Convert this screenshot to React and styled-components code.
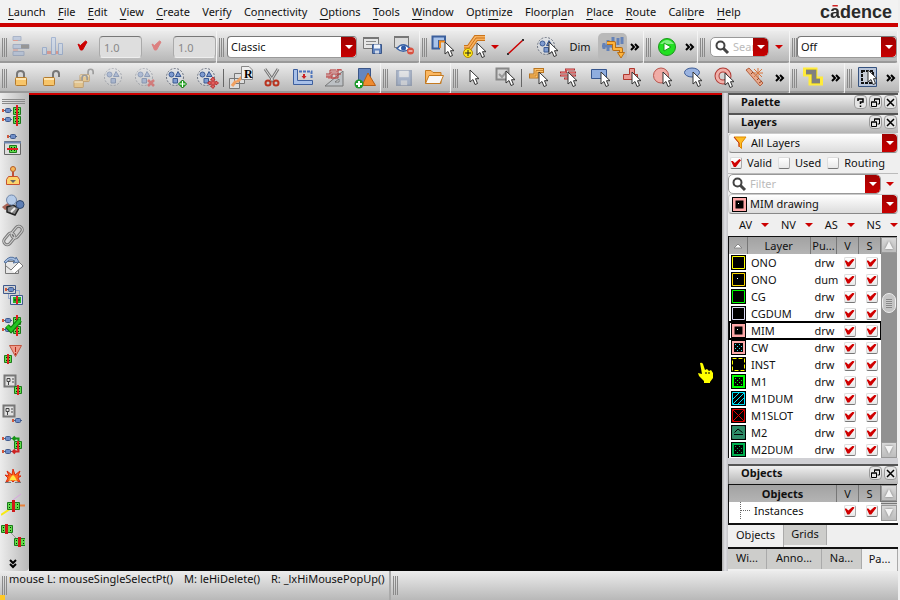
import React, { useState } from "react";
import styled, { createGlobalStyle, css } from "styled-components";

const MENUS = [
	["", "L", "aunch"],
	["", "F", "ile"],
	["", "E", "dit"],
	["", "V", "iew"],
	["", "C", "reate"],
	["Ver", "i", "fy"],
	["Co", "n", "nectivity"],
	["", "O", "ptions"],
	["", "T", "ools"],
	["", "W", "indow"],
	["Opti", "m", "ize"],
	["Floorpl", "a", "n"],
	["", "P", "lace"],
	["", "R", "oute"],
	["Cali", "b", "re"],
	["", "H", "elp"],
];

const LAYERS = [
	{ name: "ONO", purpose: "drw", color: "#ffff00", pattern: "solid" },
	{ name: "ONO", purpose: "dum", color: "#ffd700", pattern: "dot" },
	{ name: "CG", purpose: "drw", color: "#00ff00", pattern: "solid" },
	{ name: "CGDUM", purpose: "drw", color: "#d9d9f3", pattern: "solid" },
	{ name: "MIM", purpose: "drw", color: "#ffa9a9", pattern: "thick" },
	{ name: "CW", purpose: "drw", color: "#ffa9a9", pattern: "dots", fill: "#39d8e8" },
	{ name: "INST", purpose: "drw", color: "#ffff00", pattern: "dashed" },
	{ name: "M1", purpose: "drw", color: "#00ff00", pattern: "dots" },
	{ name: "M1DUM", purpose: "drw", color: "#00e5ff", pattern: "hatch" },
	{ name: "M1SLOT", purpose: "drw", color: "#e00000", pattern: "cross" },
	{ name: "M2", purpose: "drw", color: "#2e8b68", pattern: "tri" },
	{ name: "M2DUM", purpose: "drw", color: "#00b050", pattern: "dots" },
];

/* ---------- drawings ---------- */

const Svg = ({ w = 24, h = 24, children }) => (
	<svg width={w} height={h} viewBox={`0 0 ${w} ${h}`} fill="none" aria-hidden="true">
		{children}
	</svg>
);

const Pointer = ({ x, y }) => (
	<path
		transform={`translate(${x} ${y})`}
		d="M0 0V12L3 9.5L5 14.5L7.5 13.5L5.5 8.7H9Z"
		fill="#fff"
		stroke="#333"
	/>
);

const Cell = ({ x, y }) => (
	<g transform={`translate(${x} ${y})`}>
		<path d="M.5 .5H7.5V7.5H.5Z" fill="#5fdc4a" stroke="#1c7a1c" />
		<path d="M2 2H3V3H2ZM2 5H3V6H2ZM5 2H6V3H5ZM5 5H6V6H5Z" fill="#042b04" />
	</g>
);

const Pin = ({ x, y }) => (
	<g transform={`translate(${x} ${y})`}>
		<path d="M0 1H2V4H0Z" fill="#d0583c" />
		<path d="M2 2.5H10" stroke="#445b86" />
		<rect x="3.5" y=".5" width="5" height="4" rx="1" fill="#6f8ec8" stroke="#405a8c" />
	</g>
);

const Padlock = ({ x = 0, open }) => (
	<g transform={`translate(${x} 0)`}>
		<path d={open ? "M13 12V8Q13 5 16 5Q19 5 19 8V11" : "M8 12V8Q8 5 11.5 5Q15 5 15 8V12"} stroke="#777" strokeWidth="2" />
		<rect x={open ? 3.5 : 6.5} y="11.5" width="11" height="8" rx="1" fill="#f7c56a" stroke="#b57b2c" />
		<path d={open ? "M4 13H14" : "M7 13H17"} stroke="#ffe5ae" strokeWidth="2" />
	</g>
);

const Cluster = () => (
	<g>
		<circle cx="11" cy="11" r="8.5" stroke="#6b7280" strokeDasharray="2 1.5" fill="#dfe3ea" fillOpacity=".5" />
		<circle cx="7.5" cy="8.5" r="2.5" fill="#7e9bd0" stroke="#3b5a93" />
		<path d="M14 5.5L17 10.5H11.5Z" fill="#7e9bd0" stroke="#3b5a93" />
		<path d="M9 12.5H13.5V17H9Z" fill="#7e9bd0" stroke="#3b5a93" />
	</g>
);

const Floppy = ({ x, y, s = 1 }) => (
	<g transform={`translate(${x} ${y}) scale(${s})`}>
		<path d="M.5 .5H9.5V9.5H.5Z" fill="#5f82bd" stroke="#3b5688" />
		<path d="M2 .5H8V4.5H2Z" fill="#eef3fb" />
		<path d="M3 6.5H7V9.5H3Z" fill="#cfd7e5" />
	</g>
);

const ICONS = {
	align: (
		<g opacity=".55">
			<path d="M4 1.5H12V5.5H4ZM4 9.5H20V13.5H4ZM4 16.5H15V20.5H4Z" fill="#a9bcdc" stroke="#7d90b3" />
			<path d="M4 5.5H9M4 15H9" stroke="#e06a5a" />
			<path d="M12 11.5H20" stroke="#666" strokeWidth="4" />
		</g>
	),
	bars: (
		<g opacity=".5">
			<path d="M2.5 12.5H6.5V19.5H2.5ZM11.5 2.5H15.5V19.5H11.5ZM18.5 8.5H22.5V19.5H18.5Z" fill="#c8d8f0" stroke="#6f8fc4" />
			<path d="M7 17.5H11M16 17.5H18" stroke="#e06a5a" strokeWidth="3" />
		</g>
	),
	check: <path d="M7 9L9.5 10.5L14.5 6L16 7L11.5 15H9.5Z" fill="#cc0000" stroke="#cc0000" />,
	checkOff: <path d="M7 9L9.5 10.5L14.5 6L16 7L11.5 15H9.5Z" fill="#dc8080" stroke="#dc8080" />,
	winSave: (
		<g>
			<path d="M2.5 2.5H17.5V13.5H2.5Z" fill="#e6e6e6" stroke="#777" />
			<path d="M2 3H18" stroke="#777" strokeWidth="2" />
			<path d="M5 6.5H15M5 9.5H11" stroke="#888" />
			<Floppy x={11} y={9} />
		</g>
	),
	winEye: (
		<g>
			<path d="M2.5 1.5H16.5V12.5H2.5Z" fill="#dadada" stroke="#777" />
			<path d="M2 2H17" stroke="#777" strokeWidth="2" />
			<path d="M5 13.5Q11 6 18 13.5Q11 19 5 13.5Z" fill="#fff" stroke="#3d64a5" strokeWidth="1.5" />
			<circle cx="11.5" cy="13" r="2.5" fill="#2e5aa8" />
			<circle cx="18.5" cy="16" r="3.5" fill="#d9503f" />
			<path d="M16.5 16H20.5" stroke="#fff" />
		</g>
	),
	shapeSel: (
		<g>
			<path d="M1.5 1.5H14V6H8V13.5H1.5Z" fill="#a9c3ea" stroke="#3b5f9c" strokeWidth="2" />
			<path d="M14 6.5H9V13" stroke="#f08a1c" strokeWidth="2" />
			<Pointer x={14} y={7} />
		</g>
	),
	wireAdd: (
		<g>
			<path d="M2 13H7L14 3H23" stroke="#c9731a" strokeWidth="6" />
			<path d="M2 13H7L14 3H23" stroke="#f9b15e" strokeWidth="4" />
			<path d="M2 13H7L14 3H23" stroke="#c9731a" />
			<circle cx="6" cy="18" r="4.5" fill="#ffe81c" stroke="#b08a00" />
			<path d="M6 15V21M3 18H9" stroke="#222" />
			<Pointer x={15} y={8} />
		</g>
	),
	line: (
		<g>
			<path d="M4 19L19 5" stroke="#c00" strokeWidth="1.5" />
			<path d="M3 18H5V20H3ZM18 4H20V6H18Z" fill="#333" />
		</g>
	),
	clusterSel: (
		<g>
			<Cluster />
			<Pointer x={14} y={7} />
		</g>
	),
	busRoute: (
		<g>
			<path d="M3 8V14M7 5V16M12 2V13M17 3V10M21 2V9M1 11H12" stroke="#6482b8" strokeWidth="3" />
			<path d="M6 8H13V14H20V19" stroke="#b86e14" strokeWidth="4" strokeLinejoin="round" />
			<path d="M6 8H13V14H20V19" stroke="#ffb43c" strokeWidth="2" strokeLinejoin="round" />
			<path d="M16.5 17.5H23.5L20 23Z" fill="#ffb43c" stroke="#b86e14" />
		</g>
	),
	play: (
		<g>
			<circle cx="12" cy="12" r="8.5" fill="#22e022" stroke="#1a961a" />
			<path d="M5 9Q12 1 19 9" fill="#a7f7a7" opacity=".7" />
			<path d="M9 8L16 12L9 16Z" fill="#fff" stroke="#14a014" />
		</g>
	),
	lock: <Padlock />,
	unlock: <Padlock open />,
	lockPart: (
		<g opacity=".6">
			<g transform="translate(6 -1) scale(.85)"><Padlock open /></g>
			<g transform="translate(0 5) scale(.85)"><Padlock open /></g>
		</g>
	),
	cluster: <g opacity=".45"><Cluster /></g>,
	clusterDel: (
		<g opacity=".45">
			<Cluster />
			<path d="M15 14L21 20M21 14L15 20" stroke="#d22" strokeWidth="2.5" />
		</g>
	),
	clusterAdd: (
		<g>
			<Cluster />
			<path d="M18.5 14L22.5 18L18.5 22L14.5 18Z" fill="#24b124" stroke="#0c760c" />
			<path d="M18.5 15V21M15.5 18H21.5" stroke="#fff" />
		</g>
	),
	clusterMove: (
		<g>
			<Cluster />
			<path d="M18 11L20 14H19V16H21V15L23.5 17L21 19V18H19V20H20L18 22.5L15.5 20H17V18H15V19L12.5 17L15 15V16H17V14H15.5Z" fill="#e06060" stroke="#b83030" />
		</g>
	),
	rename: (
		<g>
			<path d="M.5 12.5H10.5V22.5H.5ZM5.5 7.5H15.5V17.5H5.5Z" fill="#ddd" stroke="#777" />
			<path d="M3 20L7 15M8 16L15 9" stroke="#f0a060" strokeWidth="3" />
			<path d="M12.5 .5H20L23.5 4V13.5H12.5Z" fill="#eee" stroke="#888" />
			<text x="15" y="12" fontFamily="Liberation Serif, serif" fontWeight="700" fontSize="12" fill="#000">R</text>
		</g>
	),
	cut: (
		<g>
			<path d="M5 3L14 16M18 3L10 16" stroke="#777" strokeWidth="3" />
			<path d="M5 3L14 16M18 3L10 16" stroke="#ddd" />
			<circle cx="8" cy="17" r="2.5" stroke="#b83420" strokeWidth="2" />
			<circle cx="16" cy="17" r="2.5" stroke="#b83420" strokeWidth="2" />
		</g>
	),
	stretch: (
		<g>
			<path d="M2.5 3.5H6.5V14.5H21.5V18.5H2.5Z" fill="#a8c0e8" stroke="#3d5f9e" />
			<path d="M8 5.5H20.5V13" stroke="#4d74bb" strokeDasharray="3 1" strokeWidth="2" />
			<path d="M12 8V10H10.5L13 13L15.5 10H14V8Z" fill="#c22" />
		</g>
	),
	ruler: (
		<g>
			<path d="M21 5V20H3Z" fill="#bcc0c4" stroke="#777" />
			<path d="M17 13V16H13Z" fill="#eee" stroke="#777" />
			<path d="M4 11H10V8H16V4H20M4 8H8V4H14M9 12H16V8H19" stroke="#b03434" />
			<path d="M4 10H9V6H15V3.5H19M6 12H14V8" stroke="#c85050" />
		</g>
	),
	shapes: (
		<g>
			<path d="M5.5 2.5H17.5V16.5H5.5Z" fill="#6586c0" stroke="#3b5688" />
			<path d="M15 7L22.5 19.5H9Z" fill="#ef8b2f" stroke="#b65d12" />
			<circle cx="6" cy="18" r="4.5" fill="#1a9a2a" />
			<path d="M6 15V21M3 18H9" stroke="#fff" strokeWidth="2" />
		</g>
	),
	save: <g opacity=".35"><Floppy x={4} y={4} s={1.6} /></g>,
	open: (
		<g>
			<path d="M2.5 17.5V4.5H8L10 6.5H18V17.5Z" fill="#fbb862" stroke="#c47a20" />
			<path d="M2.5 17.5L6 9.5H20.5L17 17.5Z" fill="#f8f8f8" stroke="#c47a20" />
		</g>
	),
	arrow: <Pointer x={8} y={4} />,
	boxSel: (
		<g>
			<path d="M3.5 2.5H15.5V13.5H3.5Z" fill="#d4d4d4" stroke="#888" strokeWidth="2" />
			<path d="M6 8L9 11L14 5" stroke="#999" strokeWidth="2" />
			<Pointer x={13} y={5} />
		</g>
	),
	pathSel: (
		<g>
			<path d="M2 10H9V4.5H17" stroke="#b87420" strokeWidth="5" />
			<path d="M3 10H9V4.5H16" stroke="#ffc46c" strokeWidth="3" />
			<path d="M3 10H9V4.5H16" stroke="#c98228" />
			<Pointer x={12} y={6} />
		</g>
	),
	busSel: (
		<g>
			<path d="M2 6.5H8V3.5H17M2 9.5H11V6.5H18M6 12.5H14V9.5H18" stroke="#a83232" strokeWidth="2" />
			<path d="M3 6.5H8V3.5H16M3 9.5H11V6.5H17M7 12.5H14V9.5H17" stroke="#d66" />
			<Pointer x={10} y={6} />
		</g>
	),
	rectSel: (
		<g>
			<path d="M2.5 3.5H17.5V12.5H2.5Z" fill="#8fadde" stroke="#36568f" />
			<Pointer x={12} y={6} />
		</g>
	),
	polySel: (
		<g>
			<path d="M9.5 2.5H14.5V8.5H17.5V13.5H3.5V8.5H9.5Z" fill="#ea9a94" stroke="#b0382e" />
			<Pointer x={12} y={6} />
		</g>
	),
	circSel: (
		<g>
			<circle cx="10" cy="9.5" r="7.5" fill="#f0aca6" stroke="#b8544c" />
			<Pointer x={12} y={6} />
		</g>
	),
	ellSel: (
		<g>
			<ellipse cx="10" cy="6.5" rx="7.5" ry="4.5" fill="#9ab3e0" stroke="#3d5c96" />
			<Pointer x={11} y={6} />
		</g>
	),
	ringSel: (
		<g>
			<circle cx="10" cy="10" r="6" stroke="#b03a34" strokeWidth="5" />
			<circle cx="10" cy="10" r="6" stroke="#f0b0aa" strokeWidth="3" />
			<Pointer x={12} y={7} />
		</g>
	),
	rulerStar: (
		<g>
			<path d="M2 4L5 2L19 17L16 20Z" fill="#e8a98c" stroke="#b55e3c" />
			<path d="M7 8L9 6M10 11L12 9M13 14L15 12M15 17L18 15" stroke="#8f4326" />
			<path d="M14 2V12M9 7H19M10 3L18 11M18 3L10 11" stroke="#d8743c" />
		</g>
	),
	highlight: (
		<g>
			<path d="M2 6H12V15H22" stroke="#ffeb3b" strokeWidth="9" />
			<path d="M5 6H13V15H19" stroke="#a39a3a" strokeWidth="5" />
			<path d="M5 6H13V15H19" stroke="#808080" strokeWidth="4" />
		</g>
	),
	area: (
		<g>
			<path d="M2.5 1.5H20.5V20.5H2.5Z" fill="#b8c4d8" stroke="#35527f" />
			<path d="M6 5H17V17H6Z" fill="#c9ced6" stroke="#111" strokeWidth="2" strokeDasharray="3 1" />
			<Pointer x={12} y={4} />
		</g>
	),
	// left rail
	pair: (
		<g>
			<Pin x={1} y={4} /><Pin x={1} y={13} />
			<Cell x={12} y={3} /><Cell x={12} y={12} />
			<path d="M16 1V22" stroke="#e02020" strokeWidth="2" />
		</g>
	),
	genWin: (
		<g>
			<Pin x={6} y={0} />
			<path d="M3.5 7.5H19.5V20.5H3.5Z" fill="#ddd" stroke="#666" />
			<path d="M3 8.5H20" stroke="#6d86b0" strokeWidth="2" />
			<Cell x={8} y={11} />
			<path d="M6 15H17" stroke="#e02020" strokeWidth="2" />
		</g>
	),
	stamp: (
		<g>
			<circle cx="12" cy="5" r="2.5" fill="#f7b85a" stroke="#b35b24" />
			<path d="M12 8V12" stroke="#c0503a" strokeWidth="2" />
			<path d="M7.5 12.5H16.5L18.5 15.5V20.5H5.5V15.5Z" fill="#fbd46b" stroke="#c7502e" />
			<path d="M9 16H15L12 19Z" fill="#666" />
		</g>
	),
	binoculars: (
		<g>
			<path d="M1 13L8 8L12 13L4 16Z" fill="#a86456" />
			<path d="M6 13L12 11L18 14L14 21L6 18Z" fill="#888" stroke="#222" strokeWidth="1.5" />
			<path d="M10 18L14 14" stroke="#eee" strokeWidth="2" />
			<circle cx="10.5" cy="6" r="5" fill="#b5cbe8" stroke="#7188ab" />
			<circle cx="19" cy="10.5" r="4" fill="#5e7fb5" stroke="#30496f" />
		</g>
	),
	chain: (
		<g>
			<rect x="-3.5" y="-7" width="7" height="13" rx="3.5" transform="translate(15.5 8.5) rotate(40)" stroke="#777" strokeWidth="3" />
			<rect x="-3.5" y="-6" width="7" height="13" rx="3.5" transform="translate(8.5 14.5) rotate(40)" stroke="#777" strokeWidth="3" />
			<rect x="-3.5" y="-7" width="7" height="13" rx="3.5" transform="translate(15.5 8.5) rotate(40)" stroke="#ccc" />
			<rect x="-3.5" y="-6" width="7" height="13" rx="3.5" transform="translate(8.5 14.5) rotate(40)" stroke="#ccc" />
		</g>
	),
	sheet: (
		<g>
			<path d="M4.5 7.5H17.5V19.5H4.5Z" fill="#e8e8e8" stroke="#777" />
			<path d="M5 12L10 16L18 8L22 12L14 19" fill="#fff" stroke="#777" />
			<path d="M3 8Q9 0 15 5V3L18 8L12 9L14 7Q8 4 5 9Z" fill="#a5bde0" stroke="#56749f" />
		</g>
	),
	copyWin: (
		<g>
			<path d="M7.5 6.5H18.5V14.5H7.5Z" stroke="#8ea5cc" />
			<path d="M2.5 1.5H14.5V9.5H2.5Z" fill="#d4d4d4" stroke="#405a8c" />
			<Pin x={4} y={3} />
			<path d="M9.5 11.5H21.5V20.5H9.5Z" fill="#d4dcea" stroke="#405a8c" />
			<path d="M12 13H20V19H12Z" fill="#25b425" />
			<path d="M13 16H19" stroke="#042b04" />
			<path d="M16 12V20" stroke="#e02020" strokeWidth="2" />
		</g>
	),
	pairOk: (
		<g>
			<Pin x={1} y={4} /><Pin x={1} y={13} />
			<Cell x={12} y={3} /><Cell x={12} y={12} />
			<path d="M16 1V22" stroke="#e02020" strokeWidth="2" />
			<path d="M6 12L10 16L19 6" stroke="#0c7a0c" strokeWidth="5" />
			<path d="M6 12L10 16L19 6" stroke="#23c423" strokeWidth="3" />
		</g>
	),
	warn: (
		<g>
			<path d="M8.5 1.5H20.5L14.5 12.5Z" fill="#ee9b8b" stroke="#c2543e" />
			<path d="M14.5 3V8M14.5 9V11" stroke="#b32818" />
			<Cell x={3} y={11} />
			<path d="M7 10V20" stroke="#e02020" strokeWidth="2" />
		</g>
	),
	schemCell: (
		<g>
			<path d="M3.5 1.5H14.5V12.5H3.5Z" fill="#e2e2e2" stroke="#777" strokeWidth="2" />
			<path d="M6 4.5H9V7.5H6ZM7.5 8V11M11 5H13M11 8H13" stroke="#444" />
			<Cell x={13} y={12} />
			<path d="M17 11V21" stroke="#e02020" strokeWidth="2" />
		</g>
	),
	schemPin: (
		<g>
			<path d="M2.5 1.5H13.5V12.5H2.5Z" fill="#e2e2e2" stroke="#777" strokeWidth="2" />
			<path d="M5 4.5H8V7.5H5ZM6.5 8V11M10 5H12M10 8H12" stroke="#444" />
			<Pin x={11} y={14} />
		</g>
	),
	backAnn: (
		<g>
			<Pin x={1} y={2} /><Pin x={1} y={15} />
			<path d="M17.5 7V4.5H12M14 2.5L12 4.5L14 6.5" stroke="#149414" strokeWidth="2" />
			<path d="M17.5 15V17.5H12M14 15.5L12 17.5L14 19.5" stroke="#c22" strokeWidth="2" />
			<Cell x={13} y={7} />
			<path d="M17 7V16" stroke="#e02020" strokeWidth="2" />
		</g>
	),
	explode: (
		<g>
			<path d="M5 18L7 14L4 11L8 12L6 7L11 11L12 5L14 11L19 7L17 12L20 12L17 14L19 18L14 16L12 18L10 16Z" fill="#ff6b1a" stroke="#d92a10" />
			<path d="M8 17L10 13L12 11L14 13L16 17L12 16Z" fill="#ffe640" />
			<path d="M4 18.5H10M14 18.5H20" stroke="#777" />
		</g>
	),
	flightA: (
		<g>
			<path d="M12 6L20 0" stroke="#d8a3e0" />
			<path d="M14 11.5H24" stroke="#e8813a" strokeWidth="2" />
			<path d="M0 21L9 15" stroke="#f7ea14" strokeWidth="2" />
			<Cell x={6} y={8} /><Cell x={11} y={8} />
			<path d="M12.5 6V18" stroke="#d01818" strokeWidth="3" />
		</g>
	),
	flightB: (
		<g>
			<path d="M7 6L18 17" stroke="#999" />
			<Cell x={0} y={1} /><Cell x={4} y={1} />
			<Cell x={13} y={14} /><Cell x={17} y={14} />
			<path d="M5.5 0V10M18.5 13V23" stroke="#d01818" strokeWidth="3" />
		</g>
	),
};

const Icon = ({ name }) => <Svg>{ICONS[name]}</Svg>;

const Funnel = () => (
	<Svg w={16} h={16}>
		<path d="M2 2H14L9.5 8V13.5L7 11V8Z" fill="#ffbd24" stroke="#e08a00" />
		<path d="M2 2L7 8V12" stroke="#c0301c" />
	</Svg>
);

const Magnifier = () => (
	<Svg w={16} h={16}>
		<circle cx="6.5" cy="6.5" r="4" stroke="#444" strokeWidth="2" />
		<path d="M9.5 9.5L14 14" stroke="#444" strokeWidth="3" />
	</Svg>
);

const Swatch = ({ color, pattern, fill }) => {
	const dot = fill || color;
	const wide = pattern === "thick" || pattern === "dots";
	return (
		<svg width="15" height="15" viewBox="0 0 15 15" aria-hidden="true">
			<path d="M0 0H15V15H0Z" fill="#000" />
			<path
				d={wide ? "M2 2H13V13H2Z" : "M1.5 1.5H13.5V13.5H1.5Z"}
				fill={pattern === "tri" ? color : "#000"}
				stroke={color}
				strokeWidth={pattern === "thick" ? 3 : wide ? 2 : 1}
				strokeDasharray={pattern === "dashed" ? "4 2" : "none"}
			/>
			{pattern === "thick" && <path d="M.5 .5H14.5V14.5H.5Z" fill="none" stroke="#000" />}
			{(pattern === "dot" || pattern === "thick") && <path d="M6 6H7V7H6Z" fill="#fff" />}
			{pattern === "dots" &&
				[4, 6, 8, 10].map((y) => (
					<path key={y} d={`M${y % 4 === 0 ? 4 : 6} ${y + 0.5}H12`} stroke={dot} strokeDasharray="1 3" />
				))}
			{pattern === "hatch" && <path d="M2 8L8 2M2 13L13 2M7 13L13 7" stroke={color} />}
			{pattern === "cross" && <path d="M2 2L13 13M13 2L2 13" stroke={color} />}
			{pattern === "tri" && <path d="M3.5 7.5L7 4L11.5 7.5M3 9.5H12" fill="none" stroke="#000" />}
		</svg>
	);
};

const More = ({ width }) => (
	<ToolButton $w={width} aria-label="More tools">
		<Svg w={10} h={10}>
			<path d="M1 2L4 5L1 8M5 2L8 5L5 8" stroke="#000" strokeWidth="2" />
		</Svg>
	</ToolButton>
);

const Tools = ({ names }) =>
	names.map((n) => (
		<ToolButton key={n} aria-label={n}>
			<Icon name={n} />
		</ToolButton>
	));

const Select = ({ label, value, children, flat }) => (
	<SelectBox $flat={flat}>
		{children}
		<select aria-label={label} defaultValue={value}>
			<option>{value}</option>
		</select>
		<RedArrow />
	</SelectBox>
);

const DockTitle = ({ title, help }) => (
	<TitleBar>
		<h2>{title}</h2>
		{help && (
			<TitleButton aria-label="Help">
				<Svg w={9} h={9}>
					<path d="M2 3V1H7V4H4.5V6M4.5 7.5V9" stroke="#000" strokeWidth="1.5" />
				</Svg>
			</TitleButton>
		)}
		<TitleButton aria-label="Float">
			<Svg w={9} h={9}>
				<path d="M3.5 3V1H8.5V6H6.5M3 1H9M.5 4H5.5V8.5H.5ZM0 4H6" stroke="#000" />
			</Svg>
		</TitleButton>
		<TitleButton aria-label="Close">
			<Svg w={9} h={9}>
				<path d="M1 1L8 8M8 1L1 8" stroke="#000" strokeWidth="1.5" />
			</Svg>
		</TitleButton>
	</TitleBar>
);

const App = () => {
	const [active, setActive] = useState("MIM");

	return (
		<Page>
			<GlobalStyle />
			<MenuBar>
				<MenuList>
					{MENUS.map(([pre, key, post]) => (
						<MenuItem key={pre + key + post}>
							{pre}
							<u>{key}</u>
							{post}
						</MenuItem>
					))}
				</MenuList>
				<Logo>
					c<span>ā</span>dence
				</Logo>
			</MenuBar>

			<Toolbar $h={32}>
				<Group>
					<Grip $first />
					<Tools names={["align", "bars", "check"]} />
					<NumberBox aria-label="X scale" defaultValue="1.0" disabled />
					<ToolButton $w={30} aria-label="Apply scale">
						<Icon name="checkOff" />
					</ToolButton>
					<NumberBox aria-label="Y scale" defaultValue="1.0" disabled />
				</Group>
				<Group>
					<Grip />
					<WorkspaceSlot>
						<Select label="Workspace" value="Classic" />
					</WorkspaceSlot>
					<Tools names={["winSave", "winEye"]} />
				</Group>
				<Group>
					<Grip />
					<Tools names={["shapeSel", "wireAdd"]} />
					<ToolButton $w={11} aria-label="Wire options">
						<Triangle />
					</ToolButton>
					<Tools names={["line", "clusterSel"]} />
					<ToolButton $w={36}>Dim</ToolButton>
					<ToolButton $w={29} $pressed aria-label="Bus route">
						<Icon name="busRoute" />
					</ToolButton>
					<More width={16} />
				</Group>
				<Group>
					<Grip />
					<Tools names={["play"]} />
					<More width={15} />
				</Group>
				<Group>
					<Grip />
					<SearchBox>
						<Magnifier />
						<input aria-label="Search" placeholder="Search" />
						<RedArrow />
					</SearchBox>
					<ToolButton $w={20} aria-label="Search options">
						<Triangle />
					</ToolButton>
				</Group>
				<Group $grow>
					<Grip />
					<Select label="Mode" value="Off" />
				</Group>
			</Toolbar>

			<Toolbar $h={30}>
				<Group>
					<Grip $first />
					<Tools names={["lock", "unlock", "lockPart", "cluster", "clusterDel", "clusterAdd", "clusterMove"]} />
					<Divider />
					<Tools names={["rename", "cut", "stretch", "ruler", "shapes"]} />
				</Group>
				<Group>
					<Grip />
					<Tools names={["save", "open"]} />
				</Group>
				<Group>
					<Grip />
					<Tools names={["arrow", "boxSel"]} />
					<Divider />
					<Tools names={["pathSel", "busSel", "rectSel", "polySel", "circSel", "ellSel", "ringSel", "rulerStar"]} />
					<More width={18} />
				</Group>
				<Group>
					<Grip />
					<Tools names={["highlight"]} />
					<More width={16} />
				</Group>
				<Group $grow>
					<Grip />
					<Tools names={["area"]} />
					<More width={16} />
				</Group>
			</Toolbar>

			<Work>
				<Rail>
					<RailGrip />
					{[
						"pair", "genWin", "stamp", "binoculars", "chain", "sheet", "copyWin", "pairOk",
						"warn", "schemCell", "schemPin", "backAnn", "explode", "flightA", "flightB",
					].map((n) => (
						<RailButton key={n} aria-label={n}>
							<Icon name={n} />
						</RailButton>
					))}
					<RailMore aria-label="More">
						<Svg w={10} h={10}>
							<path d="M2 1L5 4L8 1M2 5L5 8L8 5" stroke="#000" strokeWidth="2" />
						</Svg>
					</RailMore>
				</Rail>

				<Canvas>
					<Hand width="18" height="22" viewBox="0 0 18 22" aria-hidden="true">
						<path d="M3 1Q5 0 6 2L8 8L10 7L12 9L14 8L16 11V16L13 20V21H7V19L2 14L1 11L5 12Z" fill="#ffff00" />
						<path d="M9 10V12M12 10V12" stroke="#000" />
					</Hand>
				</Canvas>

				<Splitter />

				<Dock>
					<DockTitle title="Palette" help />
					<DockTitle title="Layers" />
					<Select label="Layer set" value="All Layers" flat>
						<Funnel />
					</Select>
					<CheckRow>
						<label><CheckBox defaultChecked />Valid</label>
						<label><CheckBox />Used</label>
						<label><CheckBox />Routing</label>
					</CheckRow>
					<FilterRow>
						<FilterBox>
							<Magnifier />
							<input aria-label="Filter" placeholder="Filter" />
							<RedArrow />
						</FilterBox>
						<ToolButton $w={17} aria-label="Filter options">
							<Triangle />
						</ToolButton>
					</FilterRow>
					<Select label="Entry layer" value="MIM drawing" flat>
						<Swatch color="#ffa9a9" pattern="thick" />
					</Select>
					<VisRow>
						{["AV", "NV", "AS", "NS"].map((v) => (
							<button key={v}>
								{v}
								<Triangle />
							</button>
						))}
					</VisRow>

					<ListArea $grow>
						<TableClip>
							<Table>
								<colgroup>
									<NarrowCol $w={18} />
									<col />
									<NarrowCol $w={26} />
									<NarrowCol $w={22} />
									<NarrowCol $w={22} />
								</colgroup>
								<thead>
									<tr>
										<th>
											<Svg w={8} h={6}>
												<path d="M0 5L4 1L8 5Z" fill="#fff" stroke="#888" />
											</Svg>
										</th>
										<th>Layer</th>
										<th>Pu...</th>
										<th>V</th>
										<th>S</th>
									</tr>
								</thead>
								<tbody>
									{LAYERS.map((l, i) => (
										<LayerRow key={i} $active={l.name === active} onClick={() => setActive(l.name)}>
											<td><Swatch {...l} /></td>
											<td>{l.name}</td>
											<td>{l.purpose}</td>
											<td><CheckBox aria-label={`${l.name} visible`} defaultChecked /></td>
											<td><CheckBox aria-label={`${l.name} selectable`} defaultChecked /></td>
										</LayerRow>
									))}
								</tbody>
							</Table>
						</TableClip>
						<ScrollBar>
							<ScrollStep $up aria-label="Scroll up" />
							<Thumb />
							<ScrollStep aria-label="Scroll down" />
						</ScrollBar>
					</ListArea>

					<DockGap />
					<DockTitle title="Objects" />
					<ListArea>
						<TableClip>
							<Table>
								<colgroup>
									<col />
									<NarrowCol $w={22} />
									<NarrowCol $w={22} />
								</colgroup>
								<thead>
									<tr>
										<th><b>Objects</b></th>
										<th>V</th>
										<th>S</th>
									</tr>
								</thead>
								<tbody>
									<tr>
										<TreeCell>Instances</TreeCell>
										<td><CheckBox aria-label="Instances visible" defaultChecked /></td>
										<td><CheckBox aria-label="Instances selectable" defaultChecked /></td>
									</tr>
								</tbody>
							</Table>
						</TableClip>
						<ScrollBar $short>
							<ScrollStep $up aria-label="Scroll up" />
							<ScrollRidge />
							<ScrollStep aria-label="Scroll down" />
						</ScrollBar>
					</ListArea>
					<Tabs>
						<Tab $on $w={56}>Objects</Tab>
						<Tab $w={43}>Grids</Tab>
					</Tabs>
					<Tabs>
						<Tab $w={39}>Wi...</Tab>
						<Tab $w={55}>Anno...</Tab>
						<Tab $w={40}>Na...</Tab>
						<Tab $on $w={36}>Pa...</Tab>
					</Tabs>
				</Dock>
			</Work>

			<StatusBar>
				<StatusPart>
					<Grip $first />
					<span>mouse L: mouseSingleSelectPt()</span>
					<span>M: leHiDelete()</span>
					<span>R: _lxHiMousePopUp()</span>
				</StatusPart>
				<Grip />
				<Corner />
			</StatusBar>
		</Page>
	);
};

const GlobalStyle = createGlobalStyle`
	* {
		box-sizing: border-box;
	}
	body {
		margin: 0;
		background: #efefef;
	}
	body, button, input, select {
		font: 11px/16px "Noto Sans", "Open Sans", sans-serif;
		color: #111;
	}
	button {
		padding: 0;
		border: 0;
		background: none;
	}
	svg {
		display: block;
		flex: none;
	}
`;
const bevel = css`
	background: linear-gradient(#ececec, #b8b8b8);
`;
const Page = styled.div`
	display: flex;
	flex-direction: column;
	height: 100vh;
	padding-right: 2px;
	overflow: hidden;
`;
const MenuBar = styled.nav`
	flex: none;
	display: flex;
	align-items: center;
	justify-content: space-between;
	height: 31px;
	padding: 0 6px 7px 2px;
	background: linear-gradient(#f2f2f2 23px, #cc0000 23px 27px, #efefef 27px);
`;
const MenuList = styled.div`
	flex: 1;
	display: flex;
	justify-content: space-between;
	max-width: 745px;
`;
const MenuItem = styled.button`
	padding: 0 6px;
	white-space: nowrap;
	u {
		text-underline-offset: 3px;
	}
`;
const Logo = styled.div`
	font: bold 18px/24px "Liberation Sans", Arial, sans-serif;
	color: #2a2a2a;
	span {
		color: transparent;
		background: linear-gradient(#d02020 6px, #2a2a2a 6px);
		-webkit-background-clip: text;
		background-clip: text;
	}
`;
const Toolbar = styled.div`
	flex: none;
	display: flex;
	height: ${(p) => p.$h}px;
`;
const Group = styled.div`
	flex: ${(p) => (p.$grow ? "1 0 auto" : "none")};
	display: flex;
	align-items: center;
	padding-top: 2px;
	border-right: 1px solid #f4f4f4;
	border-bottom: 2px solid #999;
	border-radius: 0 0 3px 0;
	${bevel}
`;
const Grip = styled.span`
	flex: none;
	align-self: center;
	width: 7px;
	height: 19px;
	margin-right: ${(p) => (p.$first ? -2 : 0)}px;
	background: repeating-linear-gradient(90deg, #8a8a8a 0 1px, transparent 1px 2px) right / 5px 100% no-repeat;
`;
const Divider = styled.span`
	width: 1px;
	height: 18px;
	margin: 0 1px;
	background: #666;
`;
const ToolButton = styled.button`
	flex: none;
	display: flex;
	align-items: center;
	justify-content: center;
	width: ${(p) => p.$w || 31}px;
	height: 28px;
	border-radius: 5px;
	background: ${(p) => (p.$pressed ? "#b9b9b9" : "none")};
`;
const NumberBox = styled.input`
	width: 43px;
	height: 22px;
	margin-left: 1px;
	padding: 0 4px;
	border: 1px solid #aaa;
	border-top-color: #777;
	border-bottom-color: #eee;
	border-radius: 4px;
	background: #dedede;
	color: #888;
`;
const WorkspaceSlot = styled.div`
	display: flex;
	width: 133px;
	padding-left: 3px;
`;
const Triangle = styled.span`
	border: 4px solid transparent;
	border-top-color: #cc0000;
	border-bottom: 0;
`;
const RedArrow = styled.span`
	flex: none;
	display: grid;
	place-items: center;
	align-self: stretch;
	width: 15px;
	border-radius: 0 4px 4px 0;
	background: linear-gradient(#a00000, #c80000);
	pointer-events: none;
	&::after {
		content: "";
		border: 4px solid transparent;
		border-top-color: #fff;
		border-bottom: 0;
	}
`;
const SelectBox = styled.div`
	flex: ${(p) => (p.$flat ? "none" : "1")};
	display: flex;
	align-items: center;
	min-width: 0;
	height: ${(p) => (p.$flat ? 20 : 22)}px;
	padding-left: ${(p) => (p.$flat ? 3 : 0)}px;
	overflow: hidden;
	border: 1px solid #888;
	border-color: ${(p) => (p.$flat ? "#ccc #bbb #888 #ccc" : "#777 #999 #999 #777")};
	border-radius: 4px;
	background: ${(p) => (p.$flat ? "linear-gradient(#fff, #dcdcdc)" : "#fff")};
	select {
		flex: 1;
		min-width: 0;
		height: 100%;
		padding: 0 3px;
		border: 0;
		background: none;
		appearance: none;
	}
`;
const SearchBox = styled.div`
	display: flex;
	align-items: center;
	width: 59px;
	height: 20px;
	margin-left: 5px;
	padding-left: 3px;
	overflow: hidden;
	border: 1px solid #999;
	border-radius: 5px;
	background: #fff;
	input {
		flex: 1;
		min-width: 0;
		padding: 0 0 0 3px;
		border: 0;
		background: none;
	}
	input::placeholder {
		color: #bbb;
	}
`;
const FilterBox = styled(SearchBox)`
	flex: 1;
	margin: 0;
	padding-left: 2px;
`;
const Work = styled.main`
	flex: 1;
	display: flex;
	min-height: 0;
`;
const Rail = styled.aside`
	flex: none;
	width: 29px;
	background: linear-gradient(90deg, #ececec, #b8b8b8);
	border-radius: 0 0 4px 0;
`;
const RailGrip = styled.div`
	width: 23px;
	height: 5px;
	margin: 6px 2px -3px;
	background: repeating-linear-gradient(#8a8a8a 0 1px, transparent 1px 2px);
`;
const RailButton = styled.button`
	display: flex;
	align-items: center;
	width: 26px;
	height: 30px;
	padding-left: 1px;
`;
const RailMore = styled(RailButton)`
	height: 26px;
	padding-left: 8px;
`;
const Canvas = styled.section`
	position: relative;
	flex: 1;
	min-width: 0;
	border-top: 2px solid #cc0000;
	background: #000;
`;
// sits over the drawing area, near its right edge
const Hand = styled.svg`
	position: absolute;
	top: 56%;
	right: 7px;
`;
const Splitter = styled.div`
	flex: none;
	width: 6px;
	background: linear-gradient(90deg, #aaa, #e2e2e6 3px, #c4c4c8);
`;
const Dock = styled.aside`
	flex: none;
	display: flex;
	flex-direction: column;
	width: 170px;
	background: #efefef;
`;
const TitleBar = styled.header`
	flex: none;
	display: flex;
	align-items: center;
	gap: 2px;
	height: 20px;
	padding: 0 1px 4px 12px;
	border: 1px solid #777;
	border-width: 2px 0 0 1px;
	border-top-color: #555;
	background: linear-gradient(#f0f0f0, #b4b4b4);
	h2 {
		flex: 1;
		margin: 0;
		font-size: 11px;
		line-height: 14px;
	}
`;
const TitleButton = styled.button`
	display: grid;
	place-items: center;
	width: 13px;
	height: 14px;
	border: 1px solid #999;
	border-radius: 4px;
	background: #e4e4e4;
`;
const CheckBox = styled.input.attrs({ type: "checkbox" })`
	appearance: none;
	display: grid;
	place-items: center;
	width: 12px;
	height: 12px;
	margin: 0;
	border: 1px solid #ddd;
	border-right-color: #aaa;
	border-bottom-color: #777;
	border-radius: 2px;
	background: linear-gradient(#fff, #e8e8e8);
	&:checked::after {
		content: "";
		width: 10px;
		height: 8px;
		background: #d00000;
		clip-path: polygon(0 25%, 18% 25%, 38% 50%, 84% 0, 100% 15%, 48% 100%, 28% 100%);
	}
`;
const CheckRow = styled.div`
	flex: none;
	display: flex;
	gap: 6px;
	height: 21px;
	padding-left: 2px;
	border-bottom: 1px solid #bbb;
	label {
		display: flex;
		align-items: center;
		gap: 5px;
	}
`;
const FilterRow = styled.div`
	flex: none;
	display: flex;
	align-items: center;
	height: 20px;
`;
const VisRow = styled.div`
	flex: none;
	display: flex;
	justify-content: space-between;
	height: 22px;
	padding-left: 11px;
	button {
		display: flex;
		align-items: center;
		gap: 9px;
	}
`;
const ListArea = styled.div`
	flex: ${(p) => (p.$grow ? "1 1 0" : "none")};
	display: flex;
	min-height: 0;
	height: ${(p) => (p.$grow ? "auto" : "39px")};
	margin-right: 1px;
	border: solid #111;
	border-width: 1px 0 0 1px;
	background: #fff;
`;
const TableClip = styled.div`
	flex: 1;
	min-width: 0;
	overflow: hidden;
`;
const NarrowCol = styled.col`
	width: ${(p) => p.$w}px;
`;
const Table = styled.table`
	width: 100%;
	table-layout: fixed;
	border-collapse: collapse;
	th {
		height: 17px;
		padding: 0;
		font-weight: 400;
		background: linear-gradient(#a2a2a2, #b4b4b4) padding-box;
		border-right: 1px solid #777;
		overflow: hidden;
	}
	th svg {
		margin: 0 auto;
	}
	td {
		height: 17px;
		padding: 0 0 0 4px;
		white-space: nowrap;
	}
	td:first-child {
		padding-left: 2px;
	}
	td input {
		margin-left: 3px;
	}
`;
const LayerRow = styled.tr`
	${(p) => p.$active && "outline: 2px solid #000; outline-offset: -1px;"}
`;
const TreeCell = styled.td`
	&&&& {
		padding-left: 25px;
		background:
			repeating-linear-gradient(90deg, #666 0 1px, transparent 1px 2px) 12px 8px / 10px 1px no-repeat,
			repeating-linear-gradient(#666 0 1px, transparent 1px 2px) 11px 0 / 1px 100% no-repeat;
	}
`;
const ScrollBar = styled.div`
	flex: none;
	display: flex;
	flex-direction: column;
	justify-content: space-between;
	width: 16px;
	background: #919191;
	height: ${(p) => (p.$short ? "36px" : "auto")};
`;
const ScrollStep = styled.button`
	display: grid;
	place-items: center;
	height: 16px;
	border: 1px solid #999;
	background: linear-gradient(#d8d8d8, #bdbdbd);
	&::after {
		content: "";
		border: 4px solid transparent;
		${(p) => (p.$up ? "border-top: 0; border-bottom: 8px solid #f4f4f4;" : "border-bottom: 0; border-top: 8px solid #f4f4f4;")}
		filter: drop-shadow(0 0 1px #777);
	}
`;
const ScrollRidge = styled.span`
	height: 4px;
	background: repeating-linear-gradient(#777 0 1px, #ccc 1px 2px);
`;
const Thumb = styled.div`
	width: 14px;
	height: 20px;
	margin: 40px auto auto;
	border: 1px solid #eee;
	border-radius: 7px;
	background: repeating-linear-gradient(#888 0 1px, #ccc 1px 2px) center / 6px 9px no-repeat, #c4c4c4;
`;
const DockGap = styled.div`
	flex: none;
	height: 6px;
	background: #d0d0d4;
`;
const Tabs = styled.div`
	flex: none;
	display: flex;
	align-items: flex-start;
	height: 24px;
	border-top: 2px solid #111;
`;
const Tab = styled.button`
	width: ${(p) => p.$w}px;
	height: ${(p) => (p.$on ? 22 : 20)}px;
	padding-bottom: 2px;
	border-right: 1px solid #aaa;
	background: ${(p) => (p.$on ? "#f0f0f0" : "#cdcdcb")};
`;
const StatusBar = styled.footer`
	position: relative;
	flex: none;
	display: flex;
	align-items: center;
	height: 29px;
	${bevel}
`;
const StatusPart = styled.div`
	display: flex;
	align-items: flex-start;
	align-self: stretch;
	gap: 11px;
	width: 391px;
	border-right: 2px solid #aaa;
	white-space: nowrap;
	${Grip} {
		margin-right: -9px;
	}
`;
// progress marker over the bottom left corner
const Corner = styled.span`
	position: absolute;
	left: 0;
	bottom: 0;
	width: 5px;
	height: 5px;
	background: #ffc926;
`;

export default App;
